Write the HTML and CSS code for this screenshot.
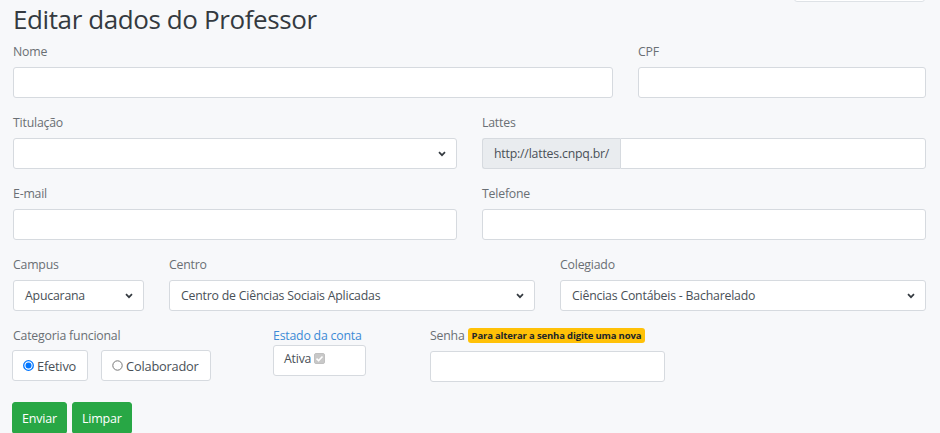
FILE: index.html
```html
<!DOCTYPE html>
<html lang="pt-BR">
<head>
<meta charset="utf-8">
<title>Editar dados do Professor</title>
<link rel="stylesheet" href="styles.css">
</head>
<body>
<div class="page">
  <div class="topbar"><div class="topbar-box"></div></div>
  <h1 class="title">Editar dados do Professor</h1>
  <form class="form">
    <div class="row cols-8-4">
      <div class="field">
        <label class="label">Nome</label>
        <div class="input"></div>
      </div>
      <div class="field">
        <label class="label">CPF</label>
        <div class="input"></div>
      </div>
    </div>
    <div class="row cols-6-6">
      <div class="field">
        <label class="label">Titulação</label>
        <div class="input select"><span></span><svg class="chev" width="8" height="6" viewBox="0 0 8 6"><path d="M1 1.2 L4 4.2 L7 1.2" fill="none" stroke="#343a40" stroke-width="1.7"/></svg></div>
      </div>
      <div class="field">
        <label class="label">Lattes</label>
        <div class="input-group">
          <span class="prepend">http://lattes.cnpq.br/</span>
          <div class="input grouped"></div>
        </div>
      </div>
    </div>
    <div class="row cols-6-6">
      <div class="field">
        <label class="label">E-mail</label>
        <div class="input"></div>
      </div>
      <div class="field">
        <label class="label">Telefone</label>
        <div class="input"></div>
      </div>
    </div>
    <div class="row cols-2-5-5">
      <div class="field">
        <label class="label">Campus</label>
        <div class="input select"><span>Apucarana</span><svg class="chev" width="8" height="6" viewBox="0 0 8 6"><path d="M1 1.2 L4 4.2 L7 1.2" fill="none" stroke="#343a40" stroke-width="1.7"/></svg></div>
      </div>
      <div class="field">
        <label class="label">Centro</label>
        <div class="input select"><span>Centro de Ciências Sociais Aplicadas</span><svg class="chev" width="8" height="6" viewBox="0 0 8 6"><path d="M1 1.2 L4 4.2 L7 1.2" fill="none" stroke="#343a40" stroke-width="1.7"/></svg></div>
      </div>
      <div class="field">
        <label class="label">Colegiado</label>
        <div class="input select"><span>Ciências Contábeis - Bacharelado</span><svg class="chev" width="8" height="6" viewBox="0 0 8 6"><path d="M1 1.2 L4 4.2 L7 1.2" fill="none" stroke="#343a40" stroke-width="1.7"/></svg></div>
      </div>
    </div>
    <div class="row-last">
      <div class="grp-cat">
        <label class="label label-tight">Categoria funcional</label>
        <div class="radios">
          <span class="radio-box">
            <svg width="11" height="11" viewBox="0 0 11 11"><circle cx="5.5" cy="5.5" r="4.8" fill="#fff" stroke="#0075ff" stroke-width="1.3"/><circle cx="5.5" cy="5.5" r="3" fill="#0075ff"/></svg>
            Efetivo
          </span>
          <span class="radio-box">
            <svg width="11" height="11" viewBox="0 0 11 11"><circle cx="5.5" cy="5.5" r="4.7" fill="#fff" stroke="#767676" stroke-width="1"/></svg>
            Colaborador
          </span>
        </div>
      </div>
      <div class="grp-estado">
        <label class="label label-blue">Estado da conta</label>
        <div class="estado-box">Ativa <svg width="11" height="11" viewBox="0 0 11 11"><rect x="0.5" y="0.5" width="10" height="10" rx="1.5" fill="#c8c8c8" stroke="#c0c0c0"/><path d="M2.5 5.6 L4.6 7.6 L8.5 3.4" fill="none" stroke="#fff" stroke-width="1.5"/></svg></div>
      </div>
      <div class="grp-senha">
        <label class="label">Senha <span class="badge">Para alterar a senha digite uma nova</span></label>
        <div class="input senha"></div>
      </div>
    </div>
    <div class="actions">
      <button type="button" class="btn">Enviar</button>
      <button type="button" class="btn">Limpar</button>
    </div>
  </form>
</div>
</body>
</html>
```
FILE: styles.css
```css
* { box-sizing: border-box; }

body {
  margin: 0;
  background: #f7f8fa;
  font-family: "Open Sans", "Noto Sans", sans-serif;
  font-size: 12.3px;
  letter-spacing: -0.2px;
  color: #495057;
  overflow: hidden;
}

.page {
  width: 913px;
  margin-left: 13px;
}

.topbar {
  display: flex;
  justify-content: flex-end;
  height: 0;
}

.topbar-box {
  width: 131px;
  height: 20px;
  margin-top: -18px;
  margin-right: 1px;
  border: 1px solid #dee2e6;
  border-radius: 3px;
  background: #fff;
}

.title {
  margin: 0;
  height: 42px;
  padding-top: 2px;
  font-size: 26px;
  font-weight: 500;
  letter-spacing: -0.4px;
  line-height: 34px;
  color: #343a40;
}

.row {
  display: grid;
  column-gap: 25px;
}

.cols-8-4 { grid-template-columns: 600px 288px; }
.cols-6-6 { grid-template-columns: 444px 444px; }
.cols-2-5-5 { grid-template-columns: 131px 366px 366px; }

.field { margin-bottom: 15px; }

.label {
  display: block;
  line-height: 19px;
  margin-bottom: 6px;
  color: #6a6f74;
}

.input {
  display: block;
  width: 100%;
  height: 31px;
  border: 1px solid #d6dadf;
  border-radius: 3px;
  background: #fff;
  padding: 0 11px;
  color: #495057;
}

.select {
  display: flex;
  align-items: center;
  justify-content: space-between;
  padding-right: 10px;
}

.chev { flex: none; }

.input-group {
  display: flex;
  height: 31px;
}

.prepend {
  display: flex;
  align-items: center;
  padding: 0 11px;
  background: #e9ecef;
  border: 1px solid #d6dadf;
  border-right: none;
  border-radius: 3px 0 0 3px;
  color: #495057;
  white-space: nowrap;
}

.grouped {
  flex: 1;
  border-radius: 0 3px 3px 0;
}

.row-last {
  display: flex;
  align-items: flex-start;
}

.grp-cat { width: 260px; }
.grp-estado { width: 157px; }
.grp-senha { width: 235px; }

.label-tight { margin-bottom: 5px; }

.label-blue {
  color: #3d8bd6;
  margin-bottom: 0;
}

.radios {
  display: flex;
  gap: 13px;
  margin-left: -1px;
}

.radio-box {
  display: inline-flex;
  align-items: center;
  gap: 3px;
  height: 31px;
  padding: 0 11px 0 10px;
  border: 1px solid #d6dadf;
  border-radius: 3px;
  background: #fff;
  color: #495057;
  font-size: 12.8px;
}

.estado-box {
  display: flex;
  align-items: center;
  gap: 3px;
  width: 93px;
  height: 31px;
  padding: 0 10px 4px;
  border: 1px solid #d6dadf;
  border-radius: 3px;
  background: #fff;
  color: #495057;
}

.badge {
  display: inline-block;
  padding: 0 4px;
  border-radius: 3px;
  background: #ffc107;
  color: #212529;
  font-size: 9.5px;
  font-weight: 700;
  letter-spacing: -0.15px;
  line-height: 15px;
  vertical-align: 1px;
}

.senha { height: 31px; }

.actions {
  display: flex;
  gap: 5px;
  margin-top: 20px;
  margin-left: -1px;
}

.btn {
  height: 32px;
  padding: 0 9px;
  border: 1px solid #28a745;
  border-radius: 3px;
  background: #28a745;
  color: #fff;
  font-family: inherit;
  font-size: 12.5px;
  letter-spacing: -0.2px;
}
```
